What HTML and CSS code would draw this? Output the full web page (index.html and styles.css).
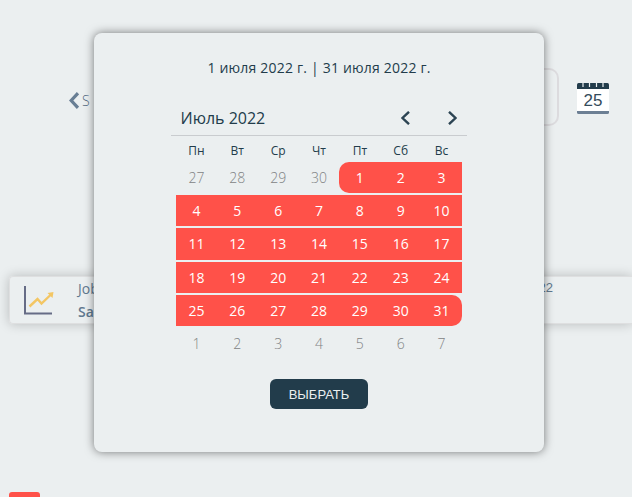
FILE: index.html
```html
<!DOCTYPE html>
<html lang="ru">
<head>
<meta charset="utf-8">
<title>Календарь</title>
<link rel="stylesheet" href="styles.css">
</head>
<body>
<main class="page">
  <header class="toolbar">
    <a class="back"><svg width="10" height="17" viewBox="0 0 10 17"><path d="M9 1.200 2.200 8.500 9 15.800" fill="none" stroke="#687e94" stroke-width="3.200"/></svg><span>S</span></a>
    <div class="field"></div>
    <svg class="calendar-icon" width="32" height="31" viewBox="0 0 32 31">
      <rect width="32" height="31" rx="1.500" fill="#fff"/>
      <path d="M0 1.500Q0 0 1.500 0H30.500Q32 0 32 1.500V6H0Z" fill="#223c4b"/>
      <path d="M6 0V4M12.500 0V4M19.500 0V4M26 0V4" stroke="#ebeff0" stroke-width="1.200"/>
      <path d="M0 28H32V29.500Q32 31 30.500 31H1.500Q0 31 0 29.500Z" fill="#6c7f94"/>
      <text class="calendar-day" x="16" y="23" text-anchor="middle">25</text>
    </svg>
  </header>
  <section class="job">
    <svg width="30" height="30" viewBox="0 0 30 30">
      <path d="M1 0V27.500H28" fill="none" stroke="#666c86" stroke-width="2"/>
      <path d="M5.500 20.500 13.500 13 17.500 17.500 27 8.500" fill="none" stroke="#f3c664" stroke-width="2.400"/>
      <path d="M23.500 7 29.500 6 28.500 12Z" fill="#f3c664"/>
    </svg>
    <div class="job-text"><span>Job</span><b>Sales</b></div>
    <span class="job-date">2022</span>
  </section>
  <div class="tab"></div>
</main>
<div class="modal">
  <div class="range">1 июля 2022 г. | 31 июля 2022 г.</div>
  <div class="month">
    <span>Июль 2022</span>
    <svg width="58" height="14" viewBox="0 0 58 14"><path d="M9 .8 2.500 7 9 13.200M49 .8 55.500 7 49 13.200" fill="none" stroke="#2c4453" stroke-width="2.400"/></svg>
  </div>
  <div class="weekdays"><span>Пн</span><span>Вт</span><span>Ср</span><span>Чт</span><span>Пт</span><span>Сб</span><span>Вс</span></div>
  <div class="days">
    <i>27</i><i>28</i><i>29</i><i>30</i><b class="first">1</b><b>2</b><b>3</b>
    <b>4</b><b>5</b><b>6</b><b>7</b><b>8</b><b>9</b><b>10</b>
    <b>11</b><b>12</b><b>13</b><b>14</b><b>15</b><b>16</b><b>17</b>
    <b>18</b><b>19</b><b>20</b><b>21</b><b>22</b><b>23</b><b>24</b>
    <b>25</b><b>26</b><b>27</b><b>28</b><b>29</b><b>30</b><b class="last">31</b>
    <i>1</i><i>2</i><i>3</i><i>4</i><i>5</i><i>6</i><i>7</i>
  </div>
  <button class="choose">ВЫБРАТЬ</button>
</div>
</body>
</html>
```
FILE: styles.css
```css
* { box-sizing: border-box; }
body {
  margin: 0;
  height: 497px;
  overflow: hidden;
  background: #ebeff0;
  color: #223c4b;
  font-family: "Open Sans", "Noto Sans", sans-serif;
}
.page { height: 497px; padding-top: 68px; overflow: hidden; }
.toolbar { display: flex; height: 58px; padding-left: 69px; }
.back {
  display: flex;
  align-items: center;
  gap: 3px;
  width: 331px;
  height: 65px;
  color: #50687f;
  font: 300 14px "Open Sans", sans-serif;
}
.field {
  width: 159px;
  height: 58px;
  border: 2px solid #dcdbde;
  border-radius: 10px;
}
.calendar-icon { margin: 15px 0 0 18px; }
.calendar-day { font: 17px "Liberation Sans", sans-serif; fill: #344b5b; }
.job {
  display: flex;
  height: 48px;
  margin: 150px 0 0 9px;
  padding: 0 0 0 14px;
  border: 1px solid #dedfe0;
  border-right: 0;
  border-radius: 4px 0 0 4px;
  box-shadow: 0 0 12px rgba(0, 0, 0, .22);
  color: #60798f;
  font-size: 14px;
}
.job > svg { margin-top: 9px; flex: none; }
.job-text { display: flex; flex: none; flex-direction: column; width: 470px; padding: 0 0 0 24px; line-height: 23px; }
.job-text b { font-weight: 600; }
.job-date { font: 13px/22px "Liberation Sans", sans-serif; }
.tab { width: 31px; height: 20px; margin: 168px 0 0 9px; border-radius: 3px; background: #ff5149; }
.modal {
  position: absolute;
  left: 94px;
  top: 33px;
  display: flex;
  flex-direction: column;
  align-items: center;
  width: 450px;
  height: 419px;
  border-radius: 8px;
  background: #ebeff0;
  box-shadow: 0 0 10px rgba(0, 0, 0, .5);
}
.range { margin-top: 25px; font-size: 14px; line-height: 20px; letter-spacing: .2px; white-space: nowrap; }
.month {
  display: flex;
  align-items: center;
  justify-content: space-between;
  width: 296px;
  height: 34px;
  margin: 24px 1px 0 0;
  padding: 0 9px 2px 10px;
  border-bottom: 1px solid #c9cccf;
  font-size: 16px;
}
.weekdays, .days { display: grid; grid-template-columns: repeat(7, 1fr); width: 286px; text-align: center; }
.weekdays { height: 26px; font-size: 12px; font-weight: 500; line-height: 30px; }
.days { grid-auto-rows: 31.3px; row-gap: 1.9px; font-size: 14px; line-height: 31px; }
.days b { background: #ff5149; color: #fff; font-weight: 400; }
.days i { color: #7f8384; font-style: normal; font-weight: 300; }
.days .first { border-radius: 10px 0 0 10px; }
.days .last { border-radius: 0 10px 10px 0; }
.choose {
  width: 98px;
  height: 30px;
  margin-top: 20px;
  padding: 0;
  border: 0;
  border-radius: 6px;
  background: #223c4b;
  color: #ebeff0;
  font: 13px "Liberation Sans", sans-serif;
}
```
